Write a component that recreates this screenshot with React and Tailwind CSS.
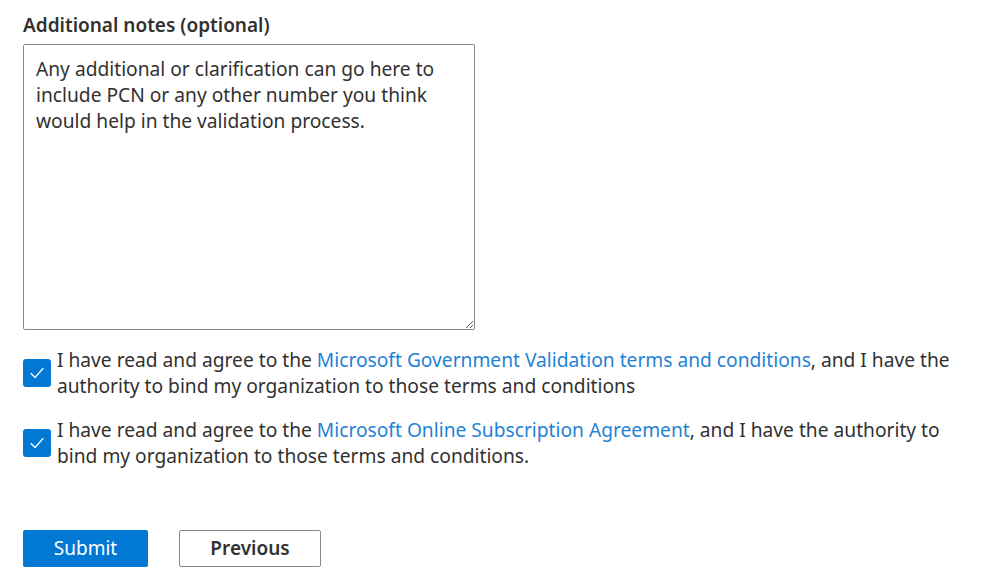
import { useState } from 'react';

const terms = [
  {
    before: 'I have read and agree to the ',
    link: 'Microsoft Government Validation terms and conditions',
    after: ', and I have the authority to bind my organization to those terms and conditions',
  },
  {
    before: 'I have read and agree to the ',
    link: 'Microsoft Online Subscription Agreement',
    after: ', and I have the authority to bind my organization to those terms and conditions.',
  },
];

function Check({ checked, onChange }) {
  return (
    <button
      onClick={onChange}
      className={`w-[28px] h-[28px] shrink-0 rounded-[3px] flex items-center justify-center ${
        checked ? 'bg-[#0078d4]' : 'bg-white border border-[#605e5c]'
      }`}
      aria-checked={checked}
      role="checkbox"
    >
      {checked && (
        <svg width="18" height="18" viewBox="0 0 18 18" fill="none">
          <path d="M3 9.5l4 4 8-9" stroke="white" strokeWidth="1.3" strokeLinecap="round" strokeLinejoin="round" />
        </svg>
      )}
    </button>
  );
}

export default function App() {
  const [checks, setChecks] = useState([true, true]);

  return (
    <div className="min-h-screen bg-white pl-[23px] pt-[13px] text-[#323130] font-['Noto_Sans',sans-serif]">
      <label className="block text-[19px] leading-[24px] font-semibold">Additional notes (optional)</label>
      <textarea
        className="mt-[7px] block w-[452px] h-[286px] border border-[#8a8886] rounded-[2px] pl-[12px] pr-[12px] pt-[11px] text-[19.2px] leading-[26px] text-[#323130] outline-none"
        defaultValue="Any additional or clarification can go here to include PCN or any other number you think would help in the validation process."
      />
      <div className="mt-[17px] flex flex-col gap-[18px] w-[935px]">
        {terms.map((t, i) => (
          <div key={t.link} className="flex items-center gap-[6px]">
            <Check
              checked={checks[i]}
              onChange={() => setChecks(checks.map((c, j) => (j === i ? !c : c)))}
            />
            <p className="text-[19.2px] leading-[26px]">
              {t.before}
              <a href="#" className="text-[#1f82d6]">{t.link}</a>
              {t.after}
            </p>
          </div>
        ))}
      </div>
      <div className="mt-[61px] flex gap-[31px]">
        <button className="w-[125px] h-[37px] rounded-[2px] bg-[#0078d4] text-white text-[19px]">Submit</button>
        <button className="w-[142px] h-[37px] rounded-[2px] border border-[#8a8886] bg-white text-[19px] font-semibold">Previous</button>
      </div>
    </div>
  );
}
